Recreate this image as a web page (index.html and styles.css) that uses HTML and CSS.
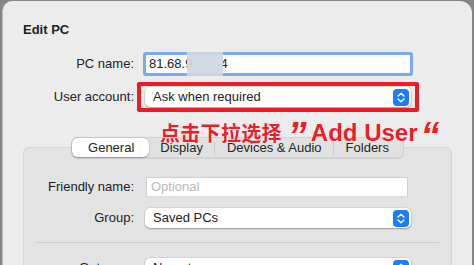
FILE: index.html
```html
<!DOCTYPE html>
<html>
<head>
<meta charset="utf-8">
<link rel="stylesheet" href="styles.css">
</head>
<body>
<div class="sheet">
  <h1 class="title">Edit PC</h1>
  <div class="row pc-row">
    <label class="label">PC name:</label>
    <div class="field focused"><span>81.68.9</span><span class="gap"></span><span>4</span><span class="blur"></span></div>
  </div>
  <div class="row user-row">
    <label class="label">User account:</label>
    <div class="popup annotated">
      <span class="popup-text">Ask when required</span>
      <svg class="stepper" viewBox="0 0 16 17" width="16" height="17"><rect x="0" y="0" width="16" height="17" rx="4" fill="#1b7ef6"/><path d="M5 7 L8 4.2 L11 7" fill="none" stroke="#fff" stroke-width="1.4" stroke-linecap="round" stroke-linejoin="round"/><path d="M5 10 L8 12.8 L11 10" fill="none" stroke="#fff" stroke-width="1.4" stroke-linecap="round" stroke-linejoin="round"/></svg>
    </div>
  </div>
  <div class="note"><span class="cjk">点击下拉选择</span><span class="quote">”</span><span class="latin">Add User</span><span class="quote q2">“</span></div>
  <div class="tabs-wrap">
    <div class="segmented">
      <div class="seg selected">General</div>
      <div class="seg">Display</div>
      <div class="seg">Devices &amp; Audio</div>
      <div class="seg last">Folders</div>
    </div>
  </div>
  <div class="groupbox">
    <div class="row g-row first">
      <label class="label g-label">Friendly name:</label>
      <div class="field plain"><span class="placeholder">Optional</span></div>
    </div>
    <div class="row g-row">
      <label class="label g-label">Group:</label>
      <div class="popup">
        <span class="popup-text">Saved PCs</span>
        <svg class="stepper" viewBox="0 0 16 17" width="16" height="17"><rect x="0" y="0" width="16" height="17" rx="4" fill="#1b7ef6"/><path d="M5 7 L8 4.2 L11 7" fill="none" stroke="#fff" stroke-width="1.4" stroke-linecap="round" stroke-linejoin="round"/><path d="M5 10 L8 12.8 L11 10" fill="none" stroke="#fff" stroke-width="1.4" stroke-linecap="round" stroke-linejoin="round"/></svg>
      </div>
    </div>
    <div class="separator"></div>
    <div class="row g-row">
      <label class="label g-label">Gateway:</label>
      <div class="popup">
        <span class="popup-text">No gateway</span>
        <svg class="stepper" viewBox="0 0 16 17" width="16" height="17"><rect x="0" y="0" width="16" height="17" rx="4" fill="#1b7ef6"/><path d="M5 7 L8 4.2 L11 7" fill="none" stroke="#fff" stroke-width="1.4" stroke-linecap="round" stroke-linejoin="round"/><path d="M5 10 L8 12.8 L11 10" fill="none" stroke="#fff" stroke-width="1.4" stroke-linecap="round" stroke-linejoin="round"/></svg>
      </div>
    </div>
  </div>
</div>
</body>
</html>
```
FILE: styles.css
```css
html, body {
  margin: 0;
  padding: 0;
  height: 265px;
  overflow: hidden;
}
body {
  background: #858585;
  font-family: "Liberation Sans", Arial, sans-serif;
  font-size: 13px;
  color: #222;
  padding-top: 1px;
  padding-left: 2px;
  box-sizing: border-box;
}
.sheet {
  width: 470px;
  height: 300px;
  background: #ececec;
  border-left: 1px solid #bdbdbd;
  border-radius: 10px 12px 0 0;
  box-sizing: border-box;
  padding: 21px 0 0 20px;
}
.title {
  margin: 0;
  font-size: 13px;
  font-weight: bold;
  line-height: 16px;
  color: #222;
}
.row {
  display: flex;
  align-items: center;
}
.label {
  width: 111px;
  text-align: right;
  flex: none;
  line-height: 16px;
}
.pc-row {
  margin-top: 17px;
  height: 18px;
}
.pc-row .field {
  margin-left: 12px;
}
.field {
  position: relative;
  width: 264px;
  height: 18px;
  background: #fff;
  box-sizing: border-box;
  display: flex;
  align-items: center;
  padding-left: 3px;
  line-height: 16px;
}
.field.focused {
  box-shadow: 0 0 0 3px #7ba8f0;
  border-radius: 1px;
}
.gap {
  display: inline-block;
  width: 28px;
}
.blur {
  position: absolute;
  left: 41px;
  top: -3px;
  width: 36px;
  height: 24px;
  background: #cfd7e3;
  opacity: 0.92;
}
.user-row {
  margin-top: 14px;
  height: 20px;
}
.popup {
  position: relative;
  margin-left: 11px;
  width: 266px;
  height: 20px;
  background: #fff;
  border-radius: 5px;
  box-shadow: 0 0 0 0.5px rgba(0,0,0,0.12), 0 1px 1.5px rgba(0,0,0,0.28);
  display: flex;
  align-items: center;
  box-sizing: border-box;
  padding-left: 8px;
}
.popup-text {
  flex: 1;
  line-height: 16px;
}
.stepper {
  margin-right: 2px;
  display: block;
}
.annotated::after {
  content: "";
  position: absolute;
  left: -8px;
  right: -8px;
  top: -5px;
  bottom: -5px;
  border: 4px solid #ea1c24;
  border-radius: 2px;
  pointer-events: none;
}
.note {
  position: relative;
  z-index: 2;
  margin-top: 8px;
  margin-left: 137px;
  height: 26px;
  display: flex;
  align-items: baseline;
  font-weight: bold;
  color: #e8202a;
  white-space: nowrap;
  text-shadow: 0 0 1px #fff, 0 0 1px #fff;
}
.cjk {
  font-family: "Noto Sans CJK SC", sans-serif;
  font-size: 20px;
  line-height: 26px;
  letter-spacing: 0.3px;
}
.quote {
  font-family: "Liberation Sans", sans-serif;
  font-size: 38px;
  line-height: 26px;
  font-style: italic;
  margin: 0 4px 0 6px;
  position: relative;
  top: 8px;
}
.q2 {
  margin: 0 0 0 3px;
}
.latin {
  font-family: "Liberation Sans", sans-serif;
  font-size: 24px;
  line-height: 26px;
}
.tabs-wrap {
  display: flex;
  justify-content: center;
  width: 429px;
  position: relative;
  z-index: 1;
  margin-top: -4px;
  margin-bottom: -11px;
}
.segmented {
  display: flex;
  background: #e1e1e1;
  border: 0.5px solid #d2d2d2;
  border-radius: 6px;
  height: 21px;
  box-sizing: border-box;
  box-shadow: 0 0.5px 1px rgba(0,0,0,0.08);
}
.seg {
  line-height: 20px;
  padding: 0 12px;
  position: relative;
  color: #252525;
}
.seg.selected {
  background: #fff;
  border-radius: 6px;
  box-shadow: 0 0 0 0.5px rgba(0,0,0,0.12), 0 1px 1.5px rgba(0,0,0,0.25);
  padding: 0 15px 0 16px;
}
.seg:nth-child(2)::after,
.seg:nth-child(3)::after {
  content: "";
  position: absolute;
  right: 0;
  top: 4px;
  width: 1px;
  height: 13px;
  background: #cbcbcb;
}
.seg:nth-child(2) { padding: 0 12px 0 11px; }
.seg:nth-child(3) { padding: 0 12px 0 12px; }
.seg.last { padding: 0 14px 0 12px; }
.groupbox {
  width: 429px;
  height: 200px;
  background: #e3e3e3;
  border: 1px solid #d6d6d6;
  border-radius: 6px;
  box-sizing: border-box;
  padding-top: 29px;
}
.g-label {
  width: 110px;
}
.g-row .field {
  margin-left: 12px;
}
.field.plain {
  width: 262px;
  height: 20px;
  border: 1px solid #cfcfcf;
  border-bottom-color: #dcdcdc;
  padding-left: 4px;
}
.placeholder {
  color: #b8b8b8;
}
.g-row {
  height: 20px;
}
.g-row + .g-row {
  margin-top: 11px;
}
.separator {
  margin: 14px 0 0 11px;
  width: 404px;
  height: 1px;
  background: #cecece;
}
.separator + .g-row {
  margin-top: 15px;
}
```
